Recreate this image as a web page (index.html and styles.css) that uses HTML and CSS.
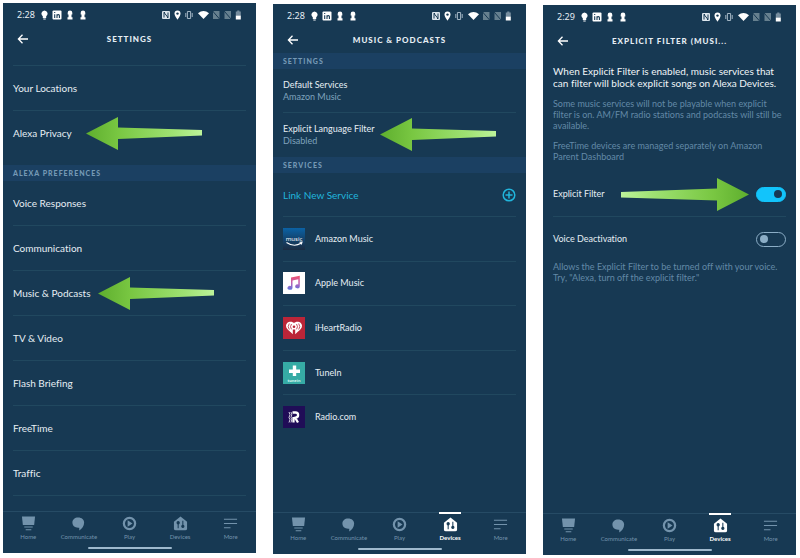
FILE: index.html
```html
<!DOCTYPE html>
<html lang="en">
<head>
<meta charset="utf-8">
<title>Alexa settings walkthrough</title>
<link rel="stylesheet" href="styles.css">
</head>
<body>
<svg class="defs" aria-hidden="true">
  <defs>
    <linearGradient id="green" x1="0" x2="1" y1="0" y2="0">
      <stop offset="0" stop-color="#5eae2e"/><stop offset=".28" stop-color="#79c742"/>
      <stop offset=".75" stop-color="#9fe273"/><stop offset="1" stop-color="#bdf39a"/>
    </linearGradient>
    <linearGradient id="blue" x1="0" x2="0" y1="0" y2="1">
      <stop offset="0" stop-color="#0b62a5"/><stop offset=".5" stop-color="#12446f"/><stop offset="1" stop-color="#1b2c42"/>
    </linearGradient>
    <linearGradient id="note" x1="0" x2="0" y1="0" y2="1">
      <stop offset="0" stop-color="#f0526b"/><stop offset=".5" stop-color="#c05fb4"/><stop offset="1" stop-color="#5b76e0"/>
    </linearGradient>
  </defs>
  <symbol id="arrow" viewBox="0 0 116 33">
    <path fill="url(#green)" d="M0 16.5 32 0V10.500L116 13V18.500L32 22V33Z"/>
  </symbol>
  <symbol id="arrow-long" viewBox="0 0 128 33">
    <path fill="url(#green)" d="M0 16.5 32 0V10.500L128 13.500V19L32 22.500V33Z"/>
  </symbol>
  <symbol id="notices" viewBox="0 0 46 12">
    <g fill="#fff">
      <path d="M3.500 1.500a3.200 3.200 0 0 1 1.700 5.800V9H1.800V7.300A3.200 3.200 0 0 1 3.500 1.500ZM2.300 9.400h2.400v1.100H2.300Z"/>
      <rect x="11.500" y="1.500" width="9" height="9" rx="1"/>
      <path d="M29 1.500a2.300 2.300 0 0 1 2.300 2.300V5.600h-.8v2.600h1v2.300h-5V8.200h1V5.600h-.8V3.800A2.300 2.300 0 0 1 29 1.500Z"/>
      <path d="M42 1.500a2.300 2.300 0 0 1 2.300 2.300V5.600h-.8v2.600h1v2.300h-5V8.200h1V5.600h-.8V3.800A2.300 2.300 0 0 1 42 1.500Z"/>
    </g>
    <path d="M13.700 5.200V9M13.700 3v1M16 9V5.200M16 7q0-1.400 1.200-1.400T18.400 7v2" fill="none" stroke="#173953" stroke-width="1.100"/>
  </symbol>
  <symbol id="signals" viewBox="0 0 80 12">
    <rect x="0" y="2" width="8" height="8" rx="1" fill="#dbe5ec"/>
    <path d="M2 8.500v-5l4 5v-5M2 3.500h1M5 8.500h1" fill="none" stroke="#173953" stroke-width="1"/>
    <path d="M15.500 1.500a3 3 0 0 1 3 3c0 2.200-3 6.200-3 6.200s-3-4-3-6.200a3 3 0 0 1 3-3Z" fill="#fff"/>
    <circle cx="15.500" cy="4.600" r="1.200" fill="#173953"/>
    <path d="M25.400 2.500h3.200v7h-3.200ZM23.800 4v4M30.200 4v4" fill="none" stroke="#a3b6c4" stroke-width="1"/>
    <path d="M36 4.200q5.500-4.400 11 0L41.500 10Z" fill="#fff"/>
    <g fill="#66808f"><path d="M51 3l1-1h5.500v8H51Z"/><path d="M62.500 3l1-1H69v8h-6.500Z"/></g>
    <path d="M51 2.500l7 8M62.500 2.500l7 8" stroke="#173953" stroke-width="1"/>
    <path d="M75.200 1.500h2.200v1h1.400v4h-5v-4h1.400Z" fill="#768d9e"/>
    <path d="M73.800 6.500h5v4h-5Z" fill="#fff"/>
  </symbol>
  <symbol id="back" viewBox="0 0 12 10">
    <path d="M5.500 .800 1.400 5 5.500 9.200M1.400 5H11" fill="none" stroke="#fff" stroke-width="1.300"/>
  </symbol>
  <symbol id="home" viewBox="0 0 16 16">
    <path d="M1 .500h14L14 9.500H2Z" fill="currentColor"/>
    <path d="M3.500 11.700h9M5 14.700h6" stroke="currentColor" stroke-width="1.200"/>
  </symbol>
  <symbol id="communicate" viewBox="0 0 16 16">
    <path d="M7.600 1.500c4 0 6.400 2.300 6.400 5.500 0 4-2.300 6.800-5.200 8.500V12.500C4.200 13 1.500 10.500 1.500 7c0-3.300 2.500-5.500 6.100-5.500Z" fill="currentColor"/>
  </symbol>
  <symbol id="play" viewBox="0 0 16 16">
    <circle cx="8" cy="8" r="6" fill="none" stroke="currentColor" stroke-width="2.400"/>
    <path d="M6 4.500 11.200 8 6 11.500Z" fill="currentColor"/>
  </symbol>
  <symbol id="devices" viewBox="0 0 16 16">
    <path d="M8 .500 15 6v7.300a2 2 0 0 1-2 2H3a2 2 0 0 1-2-2V6Z" fill="currentColor"/>
    <g stroke="#173953" stroke-width="1.100" fill="#173953"><path d="M5.500 7.500v5.500M10.500 5v5.500"/><circle cx="5.500" cy="7.200" r="1.200"/><circle cx="10.500" cy="11" r="1.200"/></g>
  </symbol>
  <symbol id="more" viewBox="0 0 16 16">
    <path d="M1 3.500h14M1 8h14M1 12.500h7" stroke="currentColor" stroke-width="1.100"/>
  </symbol>
</svg>

<main class="screens">
  <section class="phone phone-first">
    <div class="status"><span>2:28</span><svg class="notices"><use href="#notices"/></svg><svg class="signals"><use href="#signals"/></svg></div>
    <header class="bar">
      <button class="back" aria-label="Back"><svg><use href="#back"/></svg></button>
      <h1>SETTINGS</h1>
    </header>
    <div class="content">
      <div class="scrolled"></div>
      <ul class="list">
        <li><a href="#">Your Locations</a></li>
        <li class="last"><a href="#">Alexa Privacy</a><svg class="arrow at-privacy"><use href="#arrow"/></svg></li>
      </ul>
      <h2 class="band spaced">ALEXA PREFERENCES</h2>
      <ul class="list">
        <li><a href="#">Voice Responses</a></li>
        <li><a href="#">Communication</a></li>
        <li><a href="#">Music &amp; Podcasts</a><svg class="arrow at-music"><use href="#arrow"/></svg></li>
        <li><a href="#">TV &amp; Video</a></li>
        <li><a href="#">Flash Briefing</a></li>
        <li><a href="#">FreeTime</a></li>
        <li><a href="#">Traffic</a></li>
      </ul>
    </div>
    <nav class="tabs">
      <a href="#"><svg><use href="#home"/></svg>Home</a>
      <a href="#"><svg><use href="#communicate"/></svg>Communicate</a>
      <a href="#"><svg><use href="#play"/></svg>Play</a>
      <a href="#"><svg><use href="#devices"/></svg>Devices</a>
      <a href="#"><svg><use href="#more"/></svg>More</a>
    </nav>
    <div class="gesture"></div>
  </section>

  <section class="phone phone-second">
    <div class="status"><span>2:28</span><svg class="notices"><use href="#notices"/></svg><svg class="signals"><use href="#signals"/></svg></div>
    <header class="bar">
      <button class="back" aria-label="Back"><svg><use href="#back"/></svg></button>
      <h1>MUSIC &amp; PODCASTS</h1>
    </header>
    <div class="content">
      <h2 class="band">SETTINGS</h2>
      <ul class="list two-line">
        <li><a href="#">Default Services<small>Amazon Music</small></a></li>
        <li class="last"><a href="#">Explicit Language Filter<small>Disabled</small></a><svg class="arrow at-language"><use href="#arrow"/></svg></li>
      </ul>
      <h2 class="band">SERVICES</h2>
      <a class="link-new" href="#">Link New Service
        <svg viewBox="0 0 14 14"><path d="M7 3.500v7M3.500 7h7" stroke="currentColor" stroke-width="1.500"/><circle cx="7" cy="7" r="5.800" fill="none" stroke="currentColor" stroke-width="1.500"/></svg>
      </a>
      <ul class="services">
        <li>
          <svg viewBox="0 0 22 22"><path fill="url(#blue)" d="M0 0h22v22H0Z"/><text x="11" y="13" class="music-word">music</text><path d="M3.500 14.500q7.500 5 14.500.8M16.500 14.300l2.500-.2-.8 2.400" fill="none" stroke="#fff" stroke-width="1.100"/></svg>
          Amazon Music
        </li>
        <li>
          <svg viewBox="0 0 22 22"><path fill="#fff" d="M0 0h22v22H0Z"/><path fill="url(#note)" d="M8 5.500 16.800 3.800V14.500a2.300 2 0 1 1-1.500-2V7.300L9.500 8.400V16a2.500 2 0 1 1-1.500-2Z"/></svg>
          Apple Music
        </li>
        <li>
          <svg viewBox="0 0 22 22"><path fill="#bb2538" d="M0 0h22v22H0Z"/><path fill="#fff" d="M11 6.200C9.200 3.600 3 4.200 3 9c0 2.700 2.500 4.200 4.500 6l2.300 2.200V12.500h2.400v4.700l2.300-2.200c2-1.800 4.500-3.300 4.500-6 0-4.800-6.200-5.400-8-2.800Z"/><circle cx="11" cy="9.700" r="1.300" fill="#bb2538"/><path d="M8.500 7q-2 2.700 0 5.300M13.500 7q2 2.700 0 5.300M6.300 6.500q-2.200 3.200 0 6M15.700 6.500q2.200 3.200 0 6" fill="none" stroke="#bb2538" stroke-width=".8"/></svg>
          iHeartRadio
        </li>
        <li>
          <svg viewBox="0 0 22 22"><path fill="#36aba5" d="M0 0h22v22H0Z"/><path d="M11.500 3.500v10.500M6 9.200h11" stroke="#fff" stroke-width="3.400"/><text x="11" y="20" class="tunein-word">tunein</text></svg>
          TuneIn
        </li>
        <li>
          <svg viewBox="0 0 22 22"><path fill="#200d57" d="M0 0h22v22H0Z"/><path d="M9.500 6.500H12.500a2.600 2.600 0 0 1 0 5.200H11.500M12 11.500 15 16.500M10.500 11v5.500" fill="none" stroke="#fff" stroke-width="2.300"/><path d="M6 6q2 2.500 0 5.500 2 2 0 5M8 6q1.500 2.500 0 5.500 1.500 2 0 5" fill="none" stroke="#fff" stroke-width=".8"/></svg>
          Radio.com
        </li>
      </ul>
    </div>
    <nav class="tabs">
      <a href="#"><svg><use href="#home"/></svg>Home</a>
      <a href="#"><svg><use href="#communicate"/></svg>Communicate</a>
      <a href="#"><svg><use href="#play"/></svg>Play</a>
      <a href="#" class="active"><svg><use href="#devices"/></svg>Devices</a>
      <a href="#"><svg><use href="#more"/></svg>More</a>
    </nav>
    <div class="gesture"></div>
  </section>

  <section class="phone phone-third">
    <div class="status"><span>2:29</span><svg class="notices"><use href="#notices"/></svg><svg class="signals"><use href="#signals"/></svg></div>
    <header class="bar">
      <button class="back" aria-label="Back"><svg><use href="#back"/></svg></button>
      <h1>EXPLICIT FILTER (MUSI...</h1>
    </header>
    <div class="content">
      <div class="intro">
        <p class="lead">When Explicit Filter is enabled, music services that<br>can filter will block explicit songs on Alexa Devices.</p>
        <p>Some music services will not be playable when explicit<br>filter is on. AM/FM radio stations and podcasts will still be<br>available.</p>
        <p>FreeTime devices are managed separately on Amazon<br>Parent Dashboard</p>
      </div>
      <div class="toggle-row ruled"><label for="explicit">Explicit Filter</label><input id="explicit" type="checkbox" role="switch" checked><svg class="arrow arrow-right"><use href="#arrow-long"/></svg></div>
      <div class="toggle-row"><label for="voice">Voice Deactivation</label><input id="voice" type="checkbox" role="switch"></div>
      <p class="note">Allows the Explicit Filter to be turned off with your voice.<br>Try, "Alexa, turn off the explicit filter."</p>
    </div>
    <nav class="tabs">
      <a href="#"><svg><use href="#home"/></svg>Home</a>
      <a href="#"><svg><use href="#communicate"/></svg>Communicate</a>
      <a href="#"><svg><use href="#play"/></svg>Play</a>
      <a href="#" class="active"><svg><use href="#devices"/></svg>Devices</a>
      <a href="#"><svg><use href="#more"/></svg>More</a>
    </nav>
    <div class="gesture"></div>
  </section>
</main>
</body>
</html>
```
FILE: styles.css
```css
* { box-sizing: border-box; }
body, h1, h2, p, ul { margin: 0; padding: 0; }
ul { list-style: none; }
a { color: inherit; text-decoration: none; }
svg { display: block; flex: none; }
.defs { position: absolute; width: 0; height: 0; }

body {
  background: #fff;
  color: #e6eef4;
  font: 10px/12px Lato, "Noto Sans", sans-serif;
  font-variant-ligatures: none;
}

.screens {
  display: grid;
  grid-template-columns: repeat(3, 1fr);
  gap: 17px;
  min-height: 100vh;
  padding: 3px 4px 3px 3px;
}

.phone {
  display: flex;
  flex-direction: column;
  background: #173953;
}
.phone-first { margin-bottom: 2px; }
.phone-second { margin: 1px 0; }
.phone-third { margin-top: 2px; }

.status {
  display: flex;
  align-items: center;
  height: 23px;
  padding: 0 14px;
  font: 9px/12px "Noto Sans", sans-serif;
}
.notices { width: 46px; height: 12px; margin-left: 6px; }
.signals { width: 80px; height: 12px; margin-left: auto; }

.bar {
  display: grid;
  grid-template-columns: 14px 1fr 14px;
  align-items: center;
  height: 26px;
  padding: 0 14px;
}
.back { border: 0; padding: 0; background: none; }
.back svg { width: 12px; height: 10px; }
h1 {
  font-size: 8px;
  font-weight: 900;
  line-height: 12px;
  letter-spacing: 1px;
  text-align: center;
}

.content { flex: 1; }
.scrolled { height: 14px; margin: 0 10px; border-bottom: 1px solid #21485f; }
.list, .services { padding: 0 10px; }
.list li {
  position: relative;
  display: flex;
  align-items: center;
  height: 45px;
  border-bottom: 1px solid #21485f;
}
.list li.last { border-bottom-color: transparent; }
.two-line { font-size: 9px; }
.two-line li { height: 44px; }
.list small { display: block; font-size: 9px; color: #7fa3bd; }

.band {
  height: 16px;
  padding: 0 10px;
  background: #1b4062;
  color: #7599b5;
  font-size: 7px;
  font-weight: 900;
  line-height: 16px;
  letter-spacing: 1px;
}
.spaced { margin-top: 9px; }

.arrow { position: absolute; width: 116px; height: 33px; }
.at-privacy { left: 73px; top: 6px; }
.at-music { left: 85px; top: 6px; }
.at-language { left: 97px; top: 5px; }
.arrow-right { width: 128px; right: 37px; top: 6px; transform: rotate(180deg); }

.link-new {
  display: flex;
  align-items: center;
  justify-content: space-between;
  height: 44px;
  margin: 0 10px;
  border-bottom: 1px solid #21485f;
  color: #21b5dc;
}
.link-new svg { width: 14px; height: 14px; }
.services { display: grid; grid-auto-rows: 1fr; min-height: 223px; font-size: 9px; }
.services li {
  display: flex;
  align-items: center;
  gap: 10px;
  border-bottom: 1px solid #21485f;
}
.services li:last-child { border-bottom-color: transparent; }
.services svg { width: 22px; height: 22px; }
.music-word { font: 6px "Noto Sans", sans-serif; fill: #fff; text-anchor: middle; }
.tunein-word { font: bold 4px "Noto Sans", sans-serif; fill: #d5f2ef; text-anchor: middle; }

.intro {
  display: grid;
  gap: 9px;
  padding: 11px 10px 10px;
}
.intro p, .note { color: #6389a7; font-size: 9px; line-height: 11px; }
.intro .lead { color: #f0f5f8; font-size: 10px; line-height: 12px; }
.toggle-row {
  position: relative;
  display: flex;
  align-items: center;
  justify-content: space-between;
  height: 44px;
  margin: 0 10px;
  font-size: 9px;
}
.ruled { height: 45px; border-bottom: 1px solid #21485f; }
.toggle-row input {
  appearance: none;
  display: flex;
  align-items: center;
  width: 30px;
  height: 15px;
  margin: 0;
  padding: 0 3px;
  border: 1px solid #8badc6;
  border-radius: 8px;
}
.toggle-row input::before {
  content: "";
  width: 8px;
  height: 8px;
  border-radius: 50%;
  background: #8badc6;
}
.toggle-row input:checked { justify-content: flex-end; background: #12c4fb; border-color: #12c4fb; }
.toggle-row input:checked::before { background: #173953; }
.note { padding: 0 10px; }

.tabs {
  display: grid;
  grid-template-columns: repeat(5, 1fr);
  height: 36px;
  border-top: 1px solid #264b65;
  color: #7393ac;
  font-size: 6px;
  line-height: 8px;
}
.tabs a {
  position: relative;
  display: flex;
  flex-direction: column;
  align-items: center;
  gap: 2px;
  padding-top: 4px;
}
.tabs svg { width: 15px; height: 15px; }
.tabs .active { color: #fff; font-weight: bold; }
.active::before {
  content: "";
  position: absolute;
  top: -1px;
  width: 22px;
  height: 2px;
  background: #fff;
}
.gesture {
  width: 84px;
  height: 2px;
  margin: 0 auto 4px;
  border-radius: 1px;
  background: #9fb9cd;
}
```
